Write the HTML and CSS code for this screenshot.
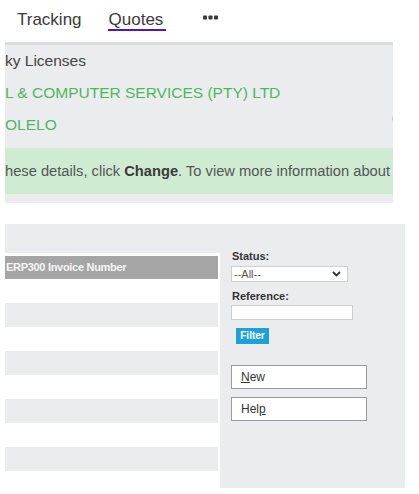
FILE: index.html
```html
<!DOCTYPE html>
<html>
<head>
<meta charset="utf-8">
<link rel="stylesheet" href="styles.css">
</head>
<body>
<nav class="nav">
  <span class="nav-item">Tracking</span>
  <span class="nav-item active">Quotes</span>
  <span class="nav-more"><svg width="15" height="5" viewBox="0 0 15 5"><rect x="0" y="0.5" width="4" height="4" rx="0.8" fill="#3a3a3a"/><rect x="5.5" y="0.5" width="4" height="4" rx="0.8" fill="#3a3a3a"/><rect x="11" y="0.5" width="4" height="4" rx="0.8" fill="#3a3a3a"/></svg></span>
</nav>

<section class="info">
  <div class="line">ky Licenses</div>
  <div class="line green">L &amp; COMPUTER SERVICES (PTY) LTD</div>
  <div class="line green split"><span>OLELO</span><span class="edge">c</span></div>
  <div class="alert">hese details, click <b>Change</b>. To view more information about</div>
</section>

<section class="main">
  <div class="list">
    <div class="thead">ERP300 Invoice Number</div>
    <div class="row"></div>
    <div class="row alt"></div>
    <div class="row"></div>
    <div class="row alt"></div>
    <div class="row"></div>
    <div class="row alt"></div>
    <div class="row"></div>
    <div class="row alt"></div>
  </div>
  <div class="side">
    <div class="label first">Status:</div>
    <div class="select"><span>--All--</span><svg width="9" height="6" viewBox="0 0 9 6"><path d="M1 1 L4.5 4.5 L8 1" fill="none" stroke="#333" stroke-width="1.8"/></svg></div>
    <div class="label second">Reference:</div>
    <div class="input"></div>
    <div class="filter">Filter</div>
    <div class="btn new"><u>N</u>ew</div>
    <div class="btn help">Hel<u>p</u></div>
  </div>
</section>
</body>
</html>
```

FILE: styles.css
```css
html, body {
  margin: 0;
  padding: 0;
  background: #ffffff;
  font-family: "Liberation Sans", Arial, sans-serif;
}

.nav {
  display: flex;
  align-items: flex-start;
  height: 42px;
  padding-left: 17px;
  box-sizing: border-box;
  color: #3a3a3a;
  font-size: 17px;
}

.nav-item {
  margin-top: 10px;
  line-height: 19px;
  height: 19px;
}

.nav-item.active {
  margin-left: 26px;
  padding: 0 3px 0 1px;
  border-bottom: 2px solid #4a16c9;
}

.nav-more {
  margin-left: 37px;
  margin-top: 15px;
  line-height: 0;
}

.info {
  margin-left: 5px;
  width: 388px;
  background: #ebecee;
  border-top: 3px solid #dcdddf;
  padding-bottom: 9px;
  overflow: hidden;
}

.line {
  height: 32px;
  line-height: 32px;
  font-size: 15.5px;
  color: #454545;
  white-space: nowrap;
}

.line.green {
  color: #4cb85e;
}

.split {
  display: flex;
  justify-content: space-between;
}

.edge {
  color: #9a9a9a;
  font-size: 12px;
  margin-right: -5px;
  margin-top: -7px;
}

.alert {
  margin-top: 7px;
  height: 46px;
  line-height: 46px;
  background: #cfecd2;
  color: #555555;
  font-size: 14.7px;
  white-space: nowrap;
}

.alert b {
  color: #3a3a3a;
}

.main {
  margin: 21px 0 0 5px;
  width: 400px;
  height: 264px;
  background: #ebecee;
  display: flex;
  align-items: flex-start;
}

.list {
  width: 215px;
  margin-top: 29px;
  padding-top: 3px;
  height: 260px;
  box-sizing: border-box;
  background: #ffffff;
}

.thead {
  width: 213px;
  height: 23px;
  line-height: 23px;
  background: #a5a5a5;
  color: #f6f6f6;
  font-size: 11px;
  font-weight: bold;
  letter-spacing: -0.3px;
  padding-left: 1px;
  box-sizing: border-box;
  white-space: nowrap;
}

.row {
  width: 213px;
  height: 24px;
  background: #ffffff;
}

.row.alt {
  background: #ebecee;
}

.side {
  flex: 1;
  padding-left: 11px;
  display: flex;
  flex-direction: column;
  align-items: flex-start;
}

.label {
  font-size: 11px;
  font-weight: bold;
  color: #333333;
  line-height: 14px;
  padding-left: 1px;
}

.label.first {
  margin-top: 25px;
}

.label.second {
  margin-top: 7px;
}

.select {
  margin-top: 3px;
  width: 117px;
  height: 16px;
  box-sizing: border-box;
  border: 1px solid #cfcfcf;
  background: #ffffff;
  display: flex;
  align-items: center;
  justify-content: space-between;
  padding: 0 6px 0 2px;
  font-size: 11px;
  color: #555555;
}

.input {
  margin-top: 2px;
  width: 122px;
  height: 15px;
  box-sizing: border-box;
  border: 1px solid #cfcfcf;
  background: #ffffff;
}

.filter {
  margin-top: 8px;
  margin-left: 5px;
  width: 33px;
  height: 16px;
  line-height: 16px;
  background: #1ca2da;
  color: #ffffff;
  font-size: 10px;
  font-weight: bold;
  text-align: center;
}

.btn {
  width: 136px;
  height: 24px;
  box-sizing: border-box;
  border: 1px solid #9a9a9a;
  background: #ffffff;
  font-size: 12px;
  color: #333333;
  line-height: 22px;
  padding-left: 9px;
}

.btn.new {
  margin-top: 21px;
}

.btn.help {
  margin-top: 8px;
}
```
